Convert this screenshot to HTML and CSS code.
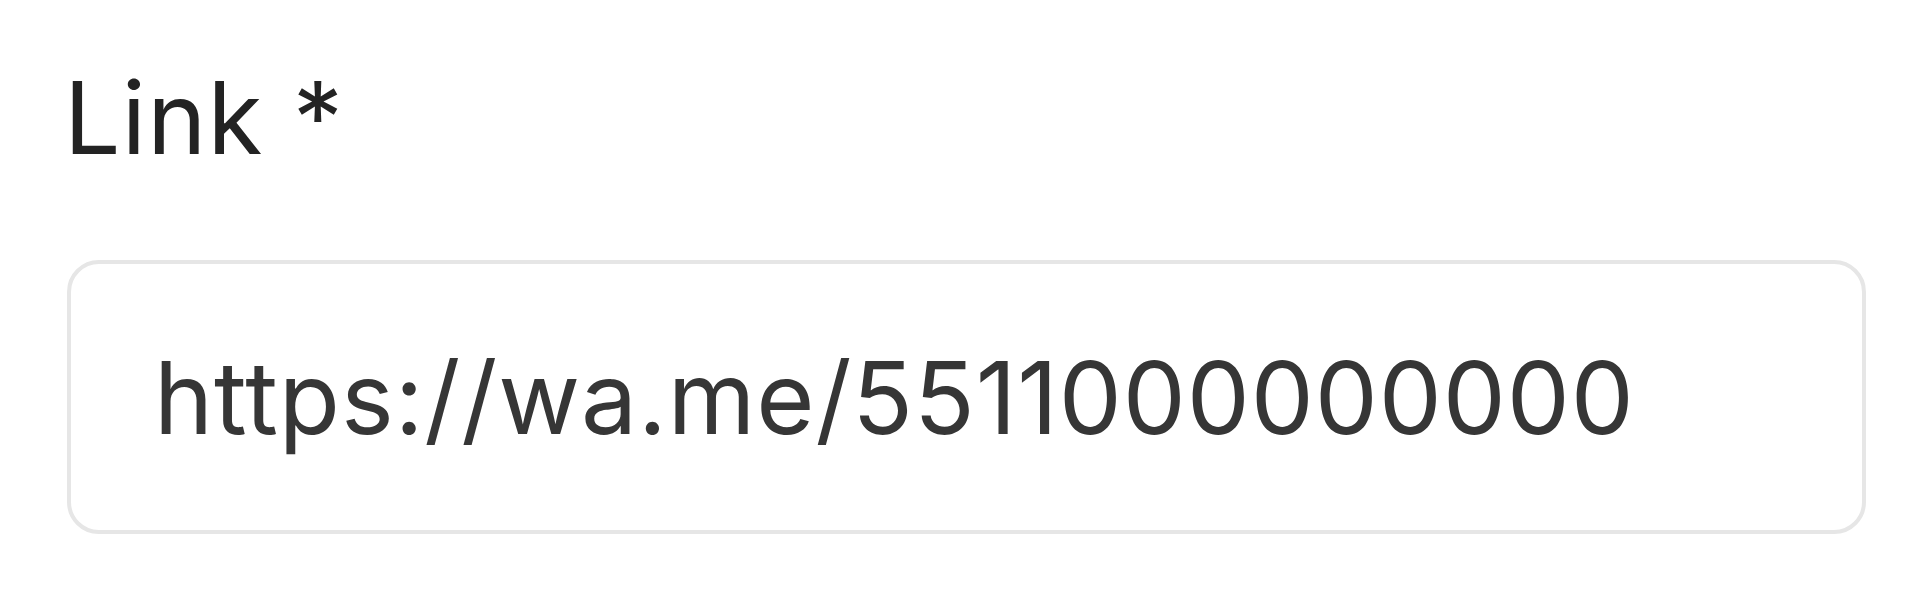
FILE: index.html
```html
<!DOCTYPE html>
<html lang="pt">
<head>
<meta charset="utf-8">
<title>Link</title>
<link rel="stylesheet" href="styles.css">
</head>
<body>
<div class="field">
  <label class="field-label" for="link">Link *</label>
  <input class="field-input" id="link" type="text" value="https://wa.me/5511000000000">
</div>
</body>
</html>
```
FILE: styles.css
```css
html, body {
  margin: 0;
  padding: 0;
  background: #ffffff;
}
body {
  width: 1920px;
  height: 606px;
  overflow: hidden;
  font-family: Inter, "Liberation Sans", sans-serif;
}
.field {
  display: flex;
  flex-direction: column;
  gap: 94px;
  padding: 70px 54px 0 67px;
}
.field-label {
  display: block;
  margin-left: -3px;
  font-size: 100px;
  line-height: 96px;
  letter-spacing: 1.2px;
  color: #232323;
  font-weight: 400;
}
.field-input {
  box-sizing: border-box;
  width: 100%;
  height: 274px;
  margin: 0;
  border: 4px solid #e6e6e6;
  border-radius: 32px;
  padding: 0 0 0 83px;
  font-family: Inter, "Liberation Sans", sans-serif;
  font-size: 100px;
  letter-spacing: 0.9px;
  color: #363636;
  background: #ffffff;
  outline: none;
}
```
